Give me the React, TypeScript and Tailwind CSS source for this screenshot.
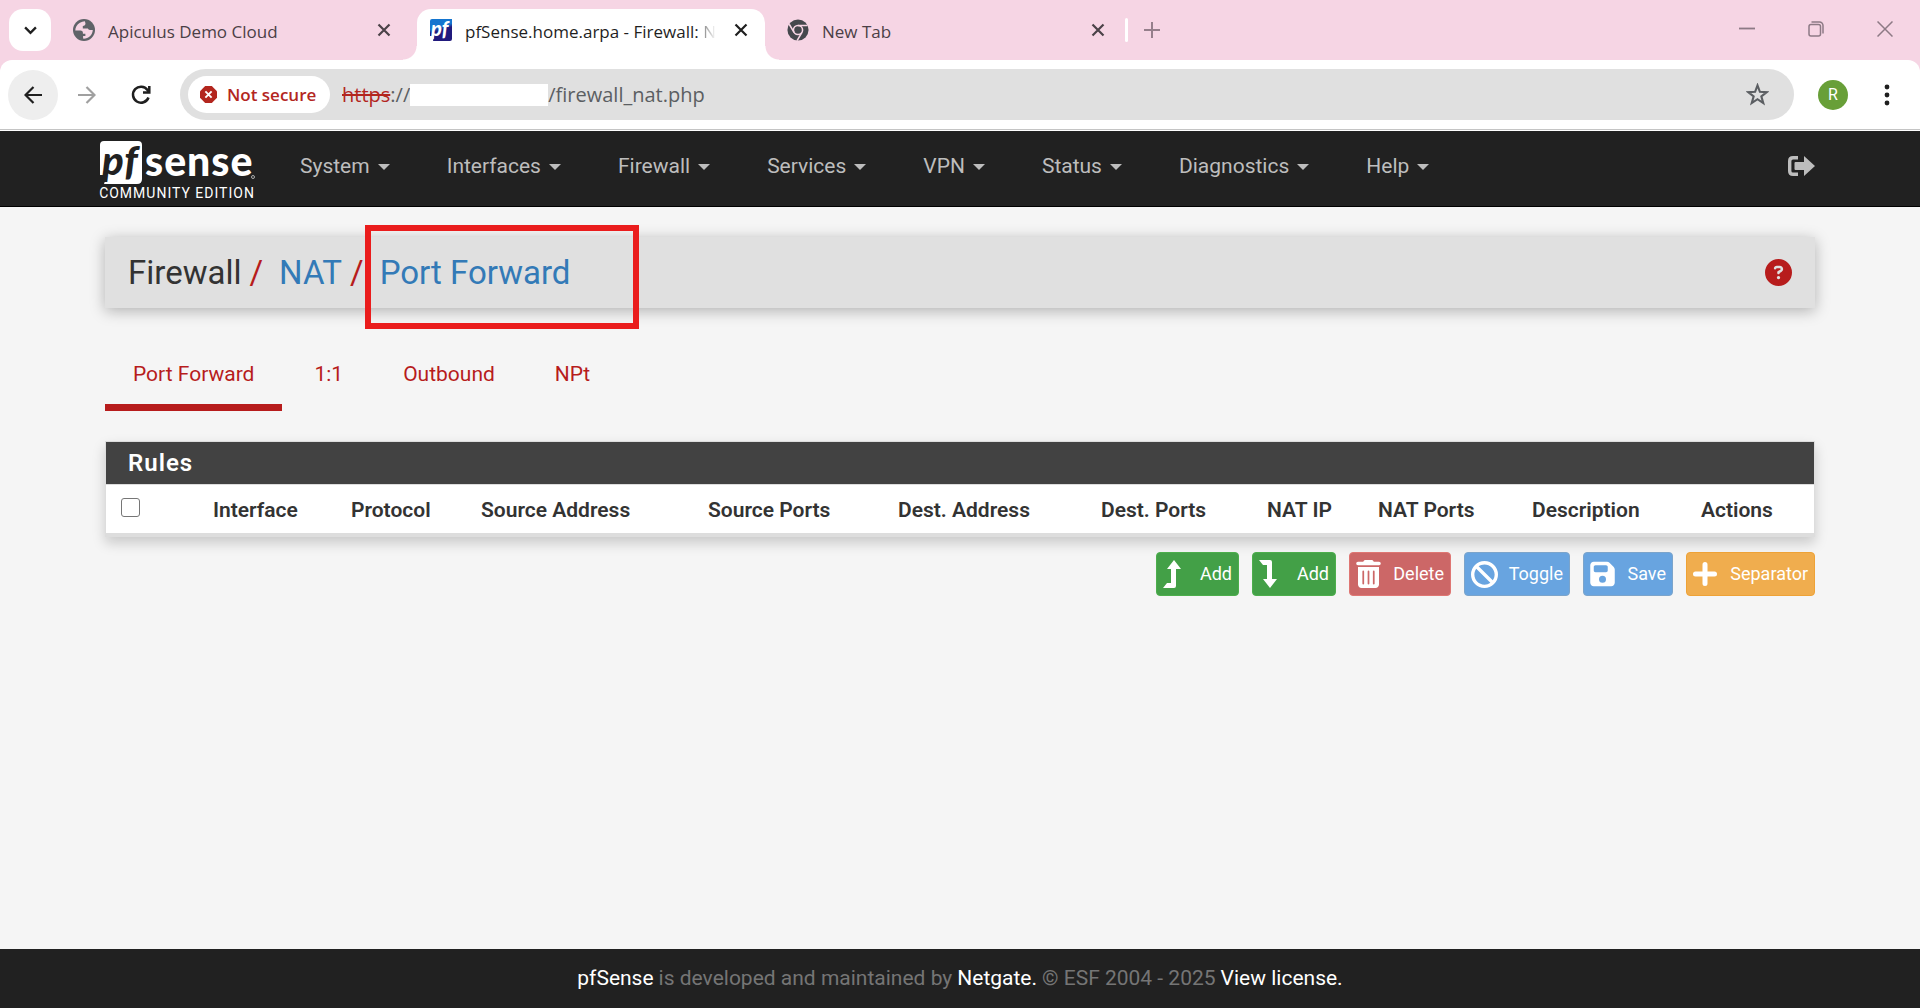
import { ReactNode } from "react";
import { FaTrashCan, FaBan, FaFloppyDisk, FaPlus, FaCircleQuestion } from "react-icons/fa6";

const navItems = ["System", "Interfaces", "Firewall", "Services", "VPN", "Status", "Diagnostics", "Help"];

const columns: { label: string; width: string }[] = [
  { label: "Interface", width: "w-[138px]" },
  { label: "Protocol", width: "w-[130px]" },
  { label: "Source Address", width: "w-[227px]" },
  { label: "Source Ports", width: "w-[190px]" },
  { label: "Dest. Address", width: "w-[203px]" },
  { label: "Dest. Ports", width: "w-[166px]" },
  { label: "NAT IP", width: "w-[111px]" },
  { label: "NAT Ports", width: "w-[154px]" },
  { label: "Description", width: "w-[169px]" },
  { label: "Actions", width: "w-[119px]" },
];

function CloseIcon({ className }: { className: string }) {
  return (
    <svg viewBox="0 0 14 14" className={`size-[14px] ${className}`} fill="none" stroke="currentColor" strokeWidth="2.2">
      <path d="M1.5 1.5 12.5 12.5M12.5 1.5 1.5 12.5" />
    </svg>
  );
}

function GlobeIcon() {
  return (
    <svg viewBox="0 0 24 24" className="size-[22px] shrink-0">
      <circle cx="12" cy="12" r="12" fill="#5f6368" />
      <path
        fill="#f6d5e4"
        d="M13 2.500c-4 .2-7.500 2-9.300 5.500-.8 1.500-1.200 3-1.200 4.500h5.500c2 0 2.800 1 2.800 2.500v1h2.700v2.500H11v2.900c5.500.4 10.300-3.500 10.600-9.400h-3.200c-1.200 0-1.700-.6-2.200-1.600h-5.500V7.500c2 0 2.900-.7 2.900-2.500z"
      />
    </svg>
  );
}

function ChromeIcon() {
  return (
    <svg viewBox="0 0 24 24" className="size-[22px] shrink-0">
      <circle cx="12" cy="12" r="11.500" fill="#45484d" />
      <circle cx="12" cy="12" r="5" fill="none" stroke="#f6d5e4" strokeWidth="1.700" />
      <path d="M12 7h10.500M7.700 14.500 2.400 5.700M16.300 14.500 11 23.500" stroke="#f6d5e4" strokeWidth="1.700" />
    </svg>
  );
}

function PfFavicon() {
  return (
    <svg viewBox="0 0 22 22" className="size-[22px] shrink-0 overflow-visible">
      <defs>
        <linearGradient id="fav" x1="0" y1="0" x2="0.300" y2="1">
          <stop offset="0.450" stopColor="#1475cf" />
          <stop offset="0.600" stopColor="#211a7d" />
        </linearGradient>
      </defs>
      <path d="M2 0h20v20q0 2-2 2H3L4 17H0V2q0-2 2-2z" fill="url(#fav)" />
      <text x="1" y="17" fontFamily="Lato, sans-serif" fontStyle="italic" fontWeight="900" fontSize="20" fill="#fff">
        pf
      </text>
    </svg>
  );
}

function PfLogo() {
  return (
    <svg viewBox="0 0 156 46" className="h-[46px] w-[156px] overflow-visible" role="img" aria-label="pfSense">
      <path d="M5 1h34q4 0 4 4v34q0 5-5 5H5L8 35H1V5q0-4 4-4z" fill="#fff" />
      <text x="3" y="35" fontFamily="Lato, sans-serif" fontStyle="italic" fontWeight="900" fontSize="40" fill="#212121">
        pf
      </text>
      <text x="46" y="36" fontFamily="Lato, sans-serif" fontWeight="900" fontSize="41" fill="#fff">
        sense
      </text>
      <circle cx="154" cy="37" r="1.500" fill="none" stroke="#ccc" strokeWidth="0.800" />
    </svg>
  );
}

function TurnArrow({ down = false }: { down?: boolean }) {
  return (
    <svg viewBox="0 0 18 28" className="h-[28px] w-[18px]" fill="#fff">
      {down ? (
        <path d="M0 0h11q2 0 2 2v17h5l-7 9-7-9h4V5H4z" />
      ) : (
        <path d="M0 28h11q2 0 2-2V9h5L11 0 4 9h4v14H4z" />
      )}
    </svg>
  );
}

function ActionButton({ color, icon, label }: { color: string; icon: ReactNode; label: string }) {
  return (
    <button type="button" className={`flex h-11 items-center justify-between rounded border px-1.5 text-lg text-white ${color}`}>
      {icon}
      <span>{label}</span>
    </button>
  );
}

function BrowserTabs() {
  return (
    <div className="flex h-[60px] items-end bg-[#f6d5e4] pl-[9px] font-['Open_Sans',sans-serif] text-[17px] text-[#4b3f46]">
      <button type="button" aria-label="Search tabs" className="mb-[9px] flex size-[42px] items-center justify-center rounded-[14px] bg-white">
        <svg viewBox="0 0 14 10" className="h-[9px] w-[13px]" fill="none" stroke="#1f1f1f" strokeWidth="2.600">
          <path d="M1 1.500 7 7.500 13 1.500" />
        </svg>
      </button>
      <div className="flex h-[51px] w-[366px] items-center pr-[26px] pb-[9px] pl-[22px]">
        <GlobeIcon />
        <span className="ml-[13px] grow pt-[3px]">Apiculus Demo Cloud</span>
        <button type="button" aria-label="Close Apiculus Demo Cloud">
          <CloseIcon className="text-[#4b4248]" />
        </button>
      </div>
      <div className="relative flex h-[51px] w-[348px] items-center rounded-t-[14px] bg-white pr-[17px] pb-[9px] pl-[13px] text-[#1f1f1f]">
        <span className="absolute bottom-0 -left-[14px] size-[14px] bg-[radial-gradient(circle_at_0_0,transparent_13px,white_14px)]" />
        <span className="absolute -right-[14px] bottom-0 size-[14px] bg-[radial-gradient(circle_at_100%_0,transparent_13px,white_14px)]" />
        <PfFavicon />
        <span className="ml-[13px] grow pt-[3px] whitespace-nowrap">
          pfSense.home.arpa - Firewall:{" "}
          <span className="bg-gradient-to-r from-[#888] to-white bg-clip-text text-transparent">N</span>
        </span>
        <button type="button" aria-label="Close pfSense">
          <CloseIcon className="text-[#1f1f1f]" />
        </button>
      </div>
      <div className="flex h-[51px] w-[358px] items-center pr-[18px] pb-[9px] pl-[22px]">
        <ChromeIcon />
        <span className="ml-[13px] grow pt-[3px]">New Tab</span>
        <button type="button" aria-label="Close New Tab">
          <CloseIcon className="text-[#4b4248]" />
        </button>
      </div>
      <div className="flex h-[42px] items-center self-center">
        <span className="ml-[2px] h-6 w-[3px] rounded bg-white" />
        <button type="button" aria-label="New tab" className="ml-4">
          <svg viewBox="0 0 16 16" className="size-4" stroke="#957f8b" strokeWidth="2">
            <path d="M8 0v16M0 8h16" />
          </svg>
        </button>
      </div>
      <div className="mr-[27px] mb-[23px] ml-auto flex items-center gap-[53px] text-[#8d7a85]">
        <button type="button" aria-label="Minimize">
          <svg viewBox="0 0 16 16" className="size-4" stroke="currentColor" strokeWidth="1.800">
            <path d="M0 7.500h16" />
          </svg>
        </button>
        <button type="button" aria-label="Restore">
          <svg viewBox="0 0 16 16" className="size-4" fill="none" stroke="currentColor" strokeWidth="1.500">
            <rect x="1" y="3.500" width="11.500" height="11.500" rx="2" />
            <path d="M3.500 1h8a3.500 3.500 0 0 1 3.500 3.500v8" />
          </svg>
        </button>
        <button type="button" aria-label="Close window">
          <svg viewBox="0 0 16 16" className="size-4" stroke="currentColor" strokeWidth="1.500">
            <path d="m.5.5 15 15m0-15-15 15" />
          </svg>
        </button>
      </div>
    </div>
  );
}

function AddressBar() {
  return (
    <div className="bg-[#f6d5e4]">
      <div className="flex h-[70px] items-center rounded-t-[12px] border-b border-[#c4c4c4] bg-white pr-[30px] pl-2 font-['Open_Sans',sans-serif]">
        <button type="button" aria-label="Back" className="flex size-[50px] items-center justify-center rounded-full bg-[#eeeeee]">
          <svg viewBox="0 0 18 18" className="size-[18px]" fill="none" stroke="#1f1f1f" strokeWidth="2.200">
            <path d="M18 9H1.500M9.500 1 1.500 9l8 8" />
          </svg>
        </button>
        <button type="button" aria-label="Forward" className="ml-5">
          <svg viewBox="0 0 18 18" className="size-[18px]" fill="none" stroke="#a0a0a0" strokeWidth="2.200">
            <path d="M0 9h16.500M8.500 1l8 8-8 8" />
          </svg>
        </button>
        <button type="button" aria-label="Reload" className="ml-[35px]">
          <svg viewBox="0 0 20 20" className="size-5" fill="none" stroke="#1f1f1f" strokeWidth="2.500">
            <path d="M17.500 12.500A8 8 0 1 1 16.500 5L18 7.500" />
            <path d="M18.300 1v6.500H12" />
          </svg>
        </button>
        <div className="ml-[29px] flex h-[51px] grow items-center rounded-full bg-[#e0e0e0] pr-[25px] pl-2 text-[20px] text-[#5b5e62]">
          <button type="button" className="flex h-[37px] w-[142px] items-center gap-[10px] rounded-full bg-white pl-3 text-[17px] font-semibold text-[#b3261e]">
            <svg viewBox="0 0 18 18" className="size-[17px]">
              <path d="M5.500 0h7L18 5.500v7L12.500 18h-7L0 12.500v-7z" fill="#b3261e" />
              <path d="m5.700 5.700 6.600 6.600m0-6.600-6.600 6.600" stroke="#fff" strokeWidth="2" />
            </svg>
            Not secure
          </button>
          <span className="ml-3 text-[#b3261e] line-through">https</span>
          <span>://</span>
          <span className="h-[22px] w-[138px] bg-white" />
          <span>/firewall_nat.php</span>
          <button type="button" aria-label="Bookmark this page" className="ml-auto">
            <svg viewBox="0 0 24 24" className="size-[23px]" fill="none" stroke="#5b5e62" strokeWidth="2.200">
              <path d="m12 2.500 2.500 6.700 7.200.3-5.700 4.500 2 6.900-6-4-6 4 2-6.900-5.700-4.500 7.200-.3z" />
            </svg>
          </button>
        </div>
        <button type="button" aria-label="Profile" className="ml-6 flex size-[30px] items-center justify-center rounded-full bg-[#689f38] font-[Roboto,sans-serif] text-base text-white">
          R
        </button>
        <button type="button" aria-label="Menu" className="ml-[36px]">
          <svg viewBox="0 0 6 22" className="h-[22px] w-[6px]" fill="#1f1f1f">
            <circle cx="3" cy="3" r="2.400" />
            <circle cx="3" cy="11" r="2.400" />
            <circle cx="3" cy="19" r="2.400" />
          </svg>
        </button>
      </div>
    </div>
  );
}

function NavBar() {
  return (
    <nav className="flex h-[76px] items-start border-b border-black bg-[#212121] pr-[105px] pl-[97px]">
      <a href="#home" className="flex w-[160px] flex-col items-center pt-[9px] text-[14px] leading-[14px] tracking-[1px] whitespace-nowrap text-white">
        <PfLogo />
        COMMUNITY EDITION
      </a>
      <div className="ml-[43px] flex h-[72px] items-center gap-[57px] text-[21px] text-[#bdbdbd]">
        {navItems.map((item) => (
          <button key={item} type="button" className="flex items-center gap-[8px]">
            {item}
            <span className="border-x-[6px] border-t-[6px] border-x-transparent border-t-[#bdbdbd]" />
          </button>
        ))}
      </div>
      <button type="button" aria-label="Log out" className="mt-[25px] ml-auto">
        <svg viewBox="0 0 27 20" className="h-5 w-[27px]" fill="#bdbdbd">
          <path d="M10 0v3.400H5Q3.400 3.400 3.400 5v10q0 1.600 1.600 1.600h5V20H5q-5 0-5-5V5q0-5 5-5z" />
          <path d="M16 0 27 10 16 20V14H7.500q-1 0-1-1V7q0-1 1-1H16z" />
        </svg>
      </button>
    </nav>
  );
}

export default function App() {
  return (
    <div className="flex min-h-screen flex-col bg-[#f5f5f5] font-[Roboto,sans-serif] text-[21px] text-[#333]">
      <header>
        <BrowserTabs />
        <AddressBar />
        <div className="h-px bg-white" />
        <NavBar />
      </header>
      <main className="grow px-[105px] pt-[30px]">
        <div className="flex h-[71px] items-center justify-between bg-[#e0e0e0] pr-[23px] pl-[23px] shadow-[0_3px_14px_rgba(0,0,0,0.280)]">
          <h1 className="flex items-center text-[33px]">
            Firewall
            <span className="ml-2 text-[#b71c1c]">/</span>
            <a href="#nat" className="ml-4 text-[#337ab7]">NAT</a>
            <span className="ml-2 text-[#b71c1c]">/</span>
            <a href="#port-forward" className="relative ml-4 text-[#337ab7]">
              Port Forward
              <span className="absolute -top-[23px] -left-[15px] h-[104px] w-[274px] border-[6px] border-[#ea1c1c]" />
            </a>
          </h1>
          <button type="button" aria-label="Help">
            <FaCircleQuestion className="size-[27px] text-[#b71c1c]" />
          </button>
        </div>
        <div className="mt-[31px] flex text-[#b71c1c]">
          <a href="#pf" className="h-[72px] border-b-[7px] border-[#b71c1c] px-7 pt-5">Port Forward</a>
          <a href="#one" className="px-8 pt-5">1:1</a>
          <a href="#outbound" className="px-7 pt-5">Outbound</a>
          <a href="#npt" className="px-8 pt-5">NPt</a>
        </div>
        <section className="mt-[30px] border border-b-4 border-[#ddd] bg-white shadow-[0_6px_12px_rgba(0,0,0,0.180)]">
          <h2 className="flex h-[43px] items-center border-b border-[#ddd] bg-[#424242] pl-[22px] text-[24px] font-semibold tracking-[1px] text-white">
            Rules
          </h2>
          <table className="w-full table-fixed">
            <thead>
              <tr className="h-[48px]">
                <th className="w-[101px] pb-1 pl-[15px] text-left">
                  <input type="checkbox" aria-label="Select all rules" className="block size-[19px] appearance-none rounded-[3px] border border-[#767676] bg-white" />
                </th>
                {columns.map((c) => (
                  <th key={c.label} className={`pt-1 pl-1.5 text-left font-semibold ${c.width}`}>
                    {c.label}
                  </th>
                ))}
              </tr>
            </thead>
          </table>
        </section>
        <div className="mt-[15px] flex justify-end gap-[13px]">
          <ActionButton color="w-[83px] bg-[#43a047] border-[#4cae4c]" icon={<TurnArrow />} label="Add" />
          <ActionButton color="w-[84px] bg-[#43a047] border-[#4cae4c]" icon={<TurnArrow down />} label="Add" />
          <ActionButton color="w-[102px] bg-[#cc6767] border-[#df7673]" icon={<FaTrashCan className="h-[28px] w-[25px]" />} label="Delete" />
          <ActionButton color="w-[106px] bg-[#68a4e0] border-[#7ba4cb]" icon={<FaBan className="size-[27px]" />} label="Toggle" />
          <ActionButton color="w-[90px] bg-[#68a4e0] border-[#7ba4cb]" icon={<FaFloppyDisk className="h-[28px] w-[25px]" />} label="Save" />
          <ActionButton
            color="w-[129px] bg-[#f0ad4e] border-[#eea236]"
            icon={
              <svg viewBox="0 0 24 24" className="size-6" stroke="#fff" strokeWidth="5" strokeLinecap="round">
                <path d="M12 2.500v19M2.500 12h19" />
              </svg>
            }
            label="Separator"
          />
        </div>
      </main>
      <footer className="flex h-[59px] items-center justify-center gap-[5px] bg-[#212121] text-[#757575]">
        <a href="#pfsense" className="text-white">pfSense</a>
        <span>is developed and maintained by</span>
        <a href="#netgate" className="text-white">Netgate.</a>
        <span>© ESF 2004 - 2025</span>
        <a href="#license" className="text-white">View license.</a>
      </footer>
    </div>
  );
}
